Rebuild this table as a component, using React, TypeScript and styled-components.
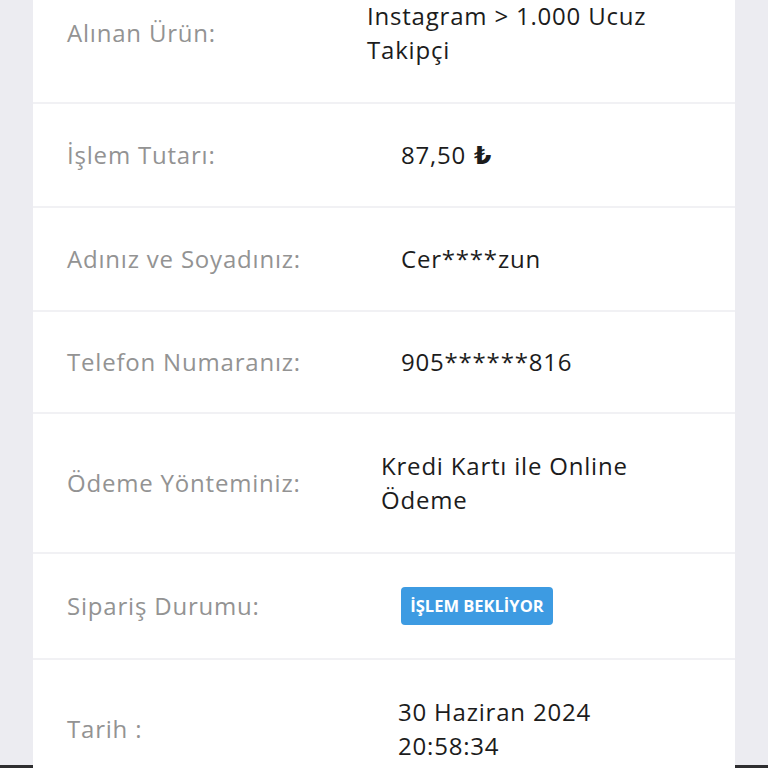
import React from "react";
import styled, { createGlobalStyle } from "styled-components";

const Global = createGlobalStyle`
  html, body { margin: 0; padding: 0; }
  html { height: 768px; overflow: hidden; }
  body {
    height: 768px;
    overflow: hidden;
    background: linear-gradient(to bottom, #ececf1 0, #ececf1 765px, #2e2e30 765px);
    font-family: "Open Sans", "Noto Sans", sans-serif;
  }
`;

const Page = styled.div`
  padding: 0 33px;
`;

const Card = styled.div`
  margin-top: -36px;
  background: #ffffff;
  display: flex;
  flex-direction: column;
`;

const Row = styled.div<{ $pad: number }>`
  display: grid;
  grid-template-columns: 334px 1fr;
  align-items: center;
  padding: ${(p) => p.$pad}px 0;
  border-bottom: 2px solid #f1f1f4;
`;

const Label = styled.div`
  padding-left: 34px;
  font-size: 24px;
  line-height: 34px;
  letter-spacing: 0.8px;
  color: #939393;
  font-weight: 400;
`;

const Value = styled.div<{ $shift: number }>`
  margin-left: ${(p) => p.$shift}px;
  font-size: 24px;
  line-height: 34px;
  letter-spacing: 0.8px;
  color: #1c1c1c;
  font-weight: 400;
`;

const Lira = styled.span`
  font-family: "DejaVu Sans", sans-serif;
  font-weight: 700;
  margin-left: 8px;
  font-size: 25px;
  line-height: 0;
`;

const Badge = styled.span`
  display: inline-flex;
  vertical-align: top;
  align-items: center;
  justify-content: center;
  width: 152px;
  height: 38px;
  box-sizing: border-box;
  background: #3d9be2;
  color: #ffffff;
  border-radius: 4px;
  font-size: 16.5px;
  letter-spacing: 0;
  line-height: 1;
  font-weight: 700;
`;

const rows: { label: string; value: React.ReactNode; shift: number; pad: number }[] = [
  { label: "Alınan Ürün:", value: <>Instagram &gt; 1.000 Ucuz<br />Takipçi</>, shift: 0, pad: 35 },
  { label: "İşlem Tutarı:", value: <>87,50<Lira>₺</Lira></>, shift: 34, pad: 34 },
  { label: "Adınız ve Soyadınız:", value: "Cer****zun", shift: 34, pad: 34 },
  { label: "Telefon Numaranız:", value: "905******816", shift: 34, pad: 33 },
  { label: "Ödeme Yönteminiz:", value: <>Kredi Kartı ile Online<br />Ödeme</>, shift: 14, pad: 35 },
  { label: "Sipariş Durumu:", value: <Badge>İŞLEM BEKLİYOR</Badge>, shift: 34, pad: 33 },
  { label: "Tarih :", value: <>30 Haziran 2024<br />20:58:34</>, shift: 31, pad: 35 },
];

export default function App() {
  return (
    <>
      <Global />
      <Page>
        <Card>
          {rows.map((r) => (
            <Row key={r.label} $pad={r.pad}>
              <Label>{r.label}</Label>
              <Value $shift={r.shift}>{r.value}</Value>
            </Row>
          ))}
        </Card>
      </Page>
    </>
  );
}
